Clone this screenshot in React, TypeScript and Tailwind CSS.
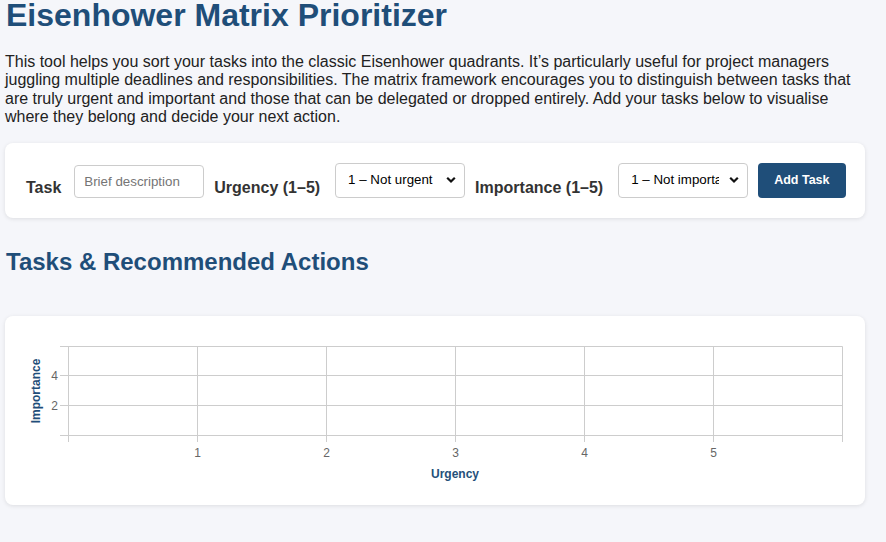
import { useState } from "react";

const urgencyOptions = [
  "1 – Not urgent",
  "2 – Low",
  "3 – Moderate",
  "4 – High",
  "5 – Very urgent",
];

const importanceOptions = [
  "1 – Not important",
  "2 – Low",
  "3 – Moderate",
  "4 – High",
  "5 – Critical",
];

function Chevron() {
  return (
    <svg
      className="pointer-events-none absolute right-[9px] top-1/2 -translate-y-1/2"
      width="10"
      height="7"
      viewBox="0 0 10 7"
    >
      <path d="M1.2 1.2 L5 5 L8.8 1.2" fill="none" stroke="#111" strokeWidth="2.2" />
    </svg>
  );
}

function Select({ options, value, onChange }: { options: string[]; value: string; onChange: (v: string) => void }) {
  return (
    <div className="relative shrink-0">
      <select
        value={value}
        onChange={(e) => onChange(e.target.value)}
        className="h-[35px] w-[130px] appearance-none rounded-[4px] border border-[#cccccc] bg-white pl-[12px] pr-7 text-[13.33px] text-black outline-none"
      >
        {options.map((o) => (
          <option key={o}>{o}</option>
        ))}
      </select>
      <Chevron />
    </div>
  );
}

function Chart() {
  // plot area in svg coordinates
  const left = 43.5;
  const right = 817.5;
  const top = 10.5;
  const bottom = 99.5;
  const xs = [0, 1, 2, 3, 4, 5, 6].map((v) => left + ((right - left) * v) / 6);
  const ys = [top, 39.5, 69.5, bottom];
  const grid = "#cdcdcd";

  return (
    <svg width="820" height="149" viewBox="0 0 820 149" className="block">
      {ys.map((y) => (
        <line key={y} x1={35} x2={right} y1={y} y2={y} stroke={grid} strokeWidth="1" />
      ))}
      {xs.map((x) => (
        <line key={x} x1={x} x2={x} y1={top} y2={106} stroke={grid} strokeWidth="1" />
      ))}
      <g fontFamily="'Liberation Sans', Arial, sans-serif" fontSize="12" fill="#666">
        {[1, 2, 3, 4, 5].map((v, i) => (
          <text key={v} x={xs[i + 1]} y={121} textAnchor="middle">
            {v}
          </text>
        ))}
        <text x={33} y={ys[1] + 4} textAnchor="end">4</text>
        <text x={33} y={ys[2] + 4} textAnchor="end">2</text>
      </g>
      <text
        x={430}
        y={142}
        textAnchor="middle"
        fontFamily="'Liberation Sans', Arial, sans-serif"
        fontSize="12"
        fontWeight="bold"
        fill="#24507a"
      >
        Urgency
      </text>
      <text
        transform="translate(15 55) rotate(-90)"
        textAnchor="middle"
        fontFamily="'Liberation Sans', Arial, sans-serif"
        fontSize="12"
        fontWeight="bold"
        fill="#1f4e79"
      >
        Importance
      </text>
    </svg>
  );
}

export default function App() {
  const [task, setTask] = useState("");
  const [urgency, setUrgency] = useState(urgencyOptions[0]);
  const [importance, setImportance] = useState(importanceOptions[0]);

  return (
    <div className="min-h-screen bg-[#f5f6fa] font-['Liberation_Sans',Arial,sans-serif] text-[#222]">
      <div className="ml-[5px] w-[860px] pb-10">
        {/* Header */}
        <h1 className="text-[32px] leading-[30px] font-bold text-[#1f4e79] pl-px">
          Eisenhower Matrix Prioritizer
        </h1>
        <p className="mt-[23px] text-[16px] leading-[18.4px] text-[#222]">
          This tool helps you sort your tasks into the classic Eisenhower quadrants. It’s particularly useful for project managers
          juggling multiple deadlines and responsibilities. The matrix framework encourages you to distinguish between tasks that
          are truly urgent and important and those that can be delegated or dropped entirely. Add your tasks below to visualise
          where they belong and decide your next action.
        </p>

        {/* Form */}
        <div className="mt-4 flex items-end rounded-lg bg-white px-5 py-5 shadow-[0_1px_4px_rgba(0,0,0,0.1)]">
          <label className="shrink-0 whitespace-nowrap pl-px text-[16px] leading-[18.4px] font-bold text-[#333]">Task</label>
          <input
            value={task}
            onChange={(e) => setTask(e.target.value)}
            placeholder="Brief description"
            className="ml-[13px] h-[33px] w-[130px] shrink-0 rounded-[4px] border border-[#cccccc] bg-white px-[9px] text-[13.33px] text-black outline-none placeholder:text-[#757575]"
          />
          <label className="ml-[10px] shrink-0 whitespace-nowrap text-[16px] leading-[18.4px] font-bold text-[#333]">
            Urgency (1–5)
          </label>
          <div className="ml-[15px] shrink-0">
            <Select options={urgencyOptions} value={urgency} onChange={setUrgency} />
          </div>
          <label className="ml-[10px] shrink-0 whitespace-nowrap text-[16px] leading-[18.4px] font-bold text-[#333]">
            Importance (1–5)
          </label>
          <div className="ml-[15px] shrink-0">
            <Select options={importanceOptions} value={importance} onChange={setImportance} />
          </div>
          <button className="ml-[10px] h-[35px] shrink-0 whitespace-nowrap rounded-[4px] bg-[#1f4e79] px-4 text-[12.5px] font-bold text-white">
            Add Task
          </button>
        </div>

        {/* Results */}
        <h2 className="mt-[30px] text-[24px] leading-[27.6px] font-bold text-[#1f4e79] pl-px">
          Tasks &amp; Recommended Actions
        </h2>
        <div className="mt-[41px] rounded-lg bg-white p-5 shadow-[0_1px_4px_rgba(0,0,0,0.1)]">
          <Chart />
        </div>
      </div>
    </div>
  );
}
